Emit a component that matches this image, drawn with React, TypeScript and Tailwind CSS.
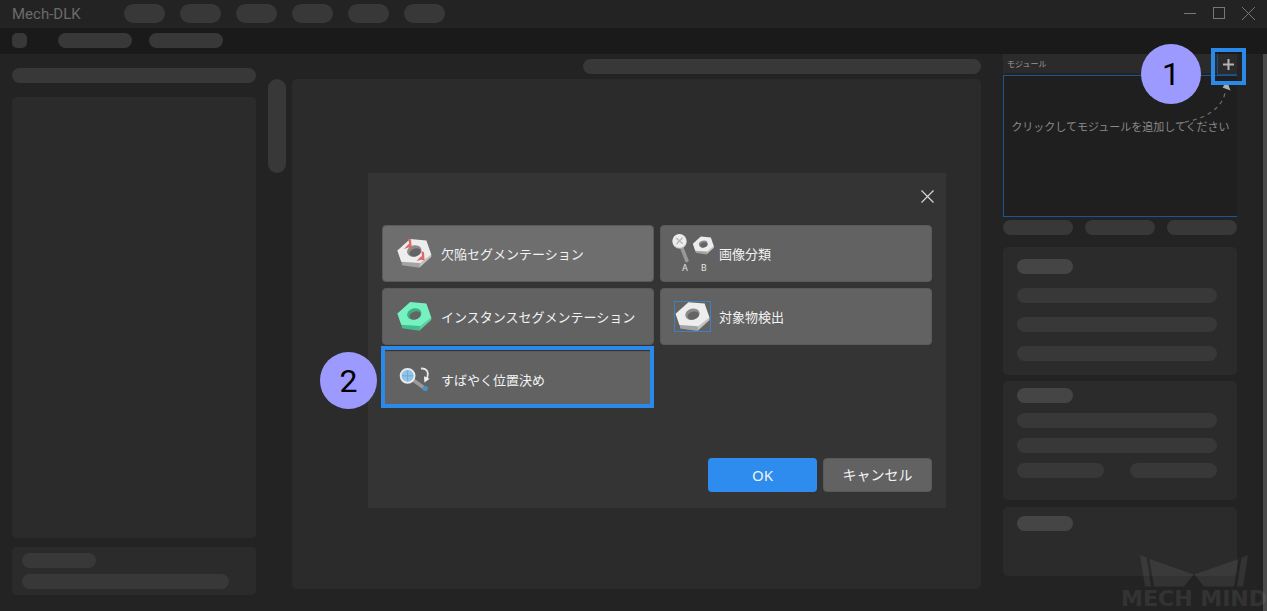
import type { ReactNode } from "react";
import clsx from "clsx";

function Pill({ className }: { className?: string }) {
  return <div className={clsx("h-[15px] shrink-0 rounded-full", className ?? "bg-[#383838]")} />;
}

function Step({ n, className }: { n: number; className: string }) {
  return (
    <span
      className={clsx(
        "pointer-events-none absolute flex items-center justify-center rounded-full bg-[#9c9aff] font-[Roboto,sans-serif] text-[32px] leading-none text-black",
        className,
      )}
    >
      {n}
    </span>
  );
}

function Nut({ face = "#ededed", left = "#a3a3a3", right = "#c2c2c2", inner = "#8b8b8b" }) {
  return (
    <>
      <path d="M0.5 12.5 4.5 23.5 5 27.2 22.3 29.7 23 24z" fill={left} />
      <path d="M22.6 24 34.2 16 34.4 18.8 22.3 29.7z" fill={right} />
      <path
        d="M0.4 12.6 13.2 1 29.4 2.4 34.3 16.4 23 25 4.2 23.8z"
        fill={face}
      />
      <ellipse cx="17.3" cy="13" rx="7.3" ry="5.6" transform="rotate(-16 17.3 13)" fill={inner} />
      <ellipse cx="18.1" cy="14.4" rx="5.8" ry="3.9" transform="rotate(-16 18.1 14.4)" fill="#646464" />
    </>
  );
}

function DefectIcon() {
  return (
    <svg width="36" height="31" viewBox="0 0 36 31" aria-hidden="true">
      <Nut />
      <path d="M11 0.8 14 1.2 14.8 10.6 11.8 9.6 7 11 10.2 7.6 12.2 5.6z" fill="#de6a68" />
      <path d="M24.4 13 27 14.2 27.6 22.8 24.6 21.8 19.6 23 22.8 19.6 25 18z" fill="#de6a68" />
    </svg>
  );
}

function InstanceIcon() {
  return (
    <svg width="36" height="31" viewBox="0 0 36 31" aria-hidden="true">
      <Nut face="#76f2c0" left="#43bd8c" right="#57d3a1" inner="#3fae84" />
    </svg>
  );
}

function ClassifyIcon() {
  return (
    <svg width="42" height="40" viewBox="0 0 42 40" aria-hidden="true">
      <path d="M9.5 13 14.8 26.5" stroke="#989898" strokeWidth="3.6" strokeLinecap="round" />
      <circle cx="7.6" cy="7.6" r="7.2" fill="#bdbdbd" />
      <circle cx="7.4" cy="6.9" r="6.9" fill="#ececec" />
      <path d="M4 4 10.8 9.8M10.6 3.6 4.4 10.2" stroke="#b9b9b9" strokeWidth="1.5" />
      <g transform="translate(20.6 2) scale(0.62)">
        <Nut />
      </g>
      <text x="10" y="37" fill="#e4e4e4" fontSize="9" fontFamily="Roboto, sans-serif">
        A
      </text>
      <text x="29" y="37" fill="#e4e4e4" fontSize="9" fontFamily="Roboto, sans-serif">
        B
      </text>
    </svg>
  );
}

function DetectIcon() {
  return (
    <svg width="38" height="31" viewBox="0 0 38 31" aria-hidden="true">
      <rect x="0.5" y="0.5" width="36" height="30" fill="none" stroke="#3c7fc4" />
      <g transform="translate(1.2 0.2)">
        <Nut />
      </g>
    </svg>
  );
}

function LocateIcon() {
  return (
    <svg width="32" height="26" viewBox="0 0 32 26" aria-hidden="true">
      <path d="M14 13 26 21.5" stroke="#9b9b9b" strokeWidth="3.4" />
      <circle cx="26.3" cy="21.4" r="2.7" fill="#4f8dbb" />
      <circle cx="8.6" cy="8.8" r="7" fill="#8fc3ea" stroke="#ececec" strokeWidth="1.8" />
      <path d="M8.6 3.5V14M3.2 8.8H14" stroke="#71a9d4" strokeWidth="1" />
      <path d="M22 1.6C27.6 0.8 30.2 5.2 28 11" fill="none" stroke="#e8e8e8" strokeWidth="1.8" />
      <path d="M25 9.2 30.6 11.8 25.4 15.4z" fill="#f0f0f0" />
    </svg>
  );
}

const modules: { label: string; icon: ReactNode; hovered?: boolean; step?: number }[] = [
  { label: "欠陥セグメンテーション", icon: <DefectIcon />, hovered: true },
  { label: "画像分類", icon: <ClassifyIcon /> },
  { label: "インスタンスセグメンテーション", icon: <InstanceIcon /> },
  { label: "対象物検出", icon: <DetectIcon /> },
  { label: "すばやく位置決め", icon: <LocateIcon />, step: 2 },
];

function TitleBar() {
  return (
    <header className="flex h-7 items-center justify-between bg-[#232323] px-3 text-[#777777]">
      <div className="flex items-center">
        <h1 className="w-28 font-[Roboto,sans-serif] text-[15px] leading-5 text-[#6b6b6b]">Mech-DLK</h1>
        <div className="flex gap-[15px] pb-px">
          {[1, 2, 3, 4, 5, 6].map((i) => (
            <div className="h-[19px] w-[41px] rounded-full bg-[#383838]" key={i} />
          ))}
        </div>
      </div>
      <div className="flex gap-4 pb-px">
        <button type="button" aria-label="最小化">
          <svg width="13" height="13" viewBox="0 0 13 13" stroke="currentColor">
            <path d="M0 6.5H12" />
          </svg>
        </button>
        <button type="button" aria-label="最大化">
          <svg width="13" height="13" viewBox="0 0 13 13" fill="none" stroke="currentColor">
            <rect x="0.5" y="0.5" width="11" height="11" />
          </svg>
        </button>
        <button type="button" aria-label="閉じる">
          <svg width="13" height="13" viewBox="0 0 13 13" stroke="currentColor">
            <path d="M0 0 13 13M13 0 0 13" />
          </svg>
        </button>
      </div>
    </header>
  );
}

function LeftPanel() {
  return (
    <aside className="mr-3 flex w-[244px] shrink-0 flex-col pt-3.5 pb-4">
      <Pill />
      <div className="mt-3.5 flex-1 rounded-[5px] bg-[#2b2b2b]" />
      <div className="mt-[9px] flex h-12 flex-col gap-1.5 rounded-[5px] bg-[#2b2b2b] px-2.5 pt-1.5">
        <Pill className="w-[74px] bg-[#383838]" />
        <Pill className="w-[207px] bg-[#383838]" />
      </div>
    </aside>
  );
}

function ModulePanel() {
  return (
    <section>
      <div className="relative z-10 flex h-[21px] items-start">
        <div className="flex h-[19px] flex-1 items-center justify-between bg-[#2b2b2b] px-1">
          <h2 className="text-[8px] leading-none text-[#9a9a9a]">モジュール</h2>
        </div>
        <div className="relative">
          <button
            type="button"
            aria-label="モジュールを追加"
            className="flex h-[21px] w-5 items-center justify-end border-b border-l border-[#1c4c80] bg-[#2b2b2b] pr-[3px]"
          >
            <svg width="11" height="11" viewBox="0 0 11 11" stroke="#b4b4b4" strokeWidth="2">
              <path d="M5.5 0V11M0 5.5H11" />
            </svg>
          </button>
          <span className="pointer-events-none absolute -top-1.5 -left-1.5 h-[37px] w-[35px] border-4 border-[#2b8ae9]" />
          <Step n={1} className="-top-2.5 right-9 size-[60px]" />
        </div>
      </div>
      <div className="relative h-[142px] border-y border-l border-[#1c5590] bg-[#1f1f1f] pt-[43px] text-center">
        <p className="text-[11px] leading-4 whitespace-nowrap text-[#8a8a8a]">
          クリックしてモジュールを追加してください
        </p>
        <svg className="absolute top-0 right-0" width="56" height="50" viewBox="0 0 56 50" fill="none" aria-hidden="true">
          <path d="M4 46C28 42 42 30 44.5 15" stroke="#6a6a6a" strokeWidth="1.3" strokeDasharray="4 4" />
          <path d="M46 5 41.5 11.5 49.5 14.5z" fill="#b0b0b0" />
        </svg>
      </div>
      <div className="mt-[3px] flex justify-between">
        <Pill className="w-[70px] bg-[#383838]" />
        <Pill className="w-[70px] bg-[#383838]" />
        <Pill className="w-[70px] bg-[#383838]" />
      </div>
    </section>
  );
}

function RightPanel() {
  return (
    <aside className="mr-[26px] ml-[22px] flex w-[234px] shrink-0 flex-col">
      <ModulePanel />
      <div className="mt-3 flex h-32 flex-col gap-3.5 rounded-[5px] bg-[#2b2b2b] pt-3 pr-5 pl-3.5">
        <Pill className="w-14 bg-[#454545]" />
        <Pill />
        <Pill />
        <Pill />
      </div>
      <div className="mt-1.5 flex h-[119px] flex-col gap-2.5 rounded-[5px] bg-[#2b2b2b] pt-[7px] pr-5 pl-3.5">
        <Pill className="w-14 bg-[#454545]" />
        <Pill />
        <Pill />
        <div className="flex justify-between">
          <Pill className="w-[87px] bg-[#383838]" />
          <Pill className="w-[87px] bg-[#383838]" />
        </div>
      </div>
      <div className="mt-[7px] h-[69px] rounded-[5px] bg-[#2b2b2b] pt-[9px] pl-3.5">
        <Pill className="w-14 bg-[#454545]" />
      </div>
    </aside>
  );
}

function Watermark() {
  return (
    <div className="pointer-events-none absolute right-0 bottom-0 flex flex-col items-center text-white opacity-[0.07]">
      <svg width="108" height="32" viewBox="0 0 108 32" fill="currentColor" aria-hidden="true">
        <path d="M0 0 6.5 2.5 11 31.5H5z" />
        <path d="M9.5 4 53.5 19.5 44 31.5H14z" />
        <path d="M98.5 4 54.5 19.5 64 31.5H94z" />
        <path d="M108 0 101.5 2.5 97 31.5H103z" />
      </svg>
      <span className="font-['DejaVu_Sans'] text-[22px] leading-6 font-bold whitespace-nowrap">MECH MIND</span>
    </div>
  );
}

function AddModuleDialog() {
  return (
    <div className="absolute inset-0 z-20 flex items-center justify-center pt-[70px] pl-[47px]">
      <div role="dialog" aria-label="モジュールを追加" className="w-[578px] bg-[#343434] pb-4 text-[#f2f2f2]">
        <div className="flex h-[52px] items-center justify-end pr-3">
          <button type="button" aria-label="閉じる" className="-mt-1.5">
            <svg width="13" height="13" viewBox="0 0 13 13" stroke="#d6d6d6" strokeWidth="1.2">
              <path d="M0.5 0.5 12.5 12.5M12.5 0.5 0.5 12.5" />
            </svg>
          </button>
        </div>
        <div className="grid grid-cols-2 gap-1.5 px-3.5">
          {modules.map((m) => (
            <div className="relative" key={m.label}>
              <button
                type="button"
                className={clsx(
                  "flex h-[57px] w-full items-center rounded border border-[#5a5a5a] text-left text-[13px] leading-5",
                  m.hovered ? "bg-[#6e6e6e]" : "bg-[#626262]",
                )}
              >
                <span className="flex w-[58px] shrink-0 justify-center pl-1.5">{m.icon}</span>
                {m.label}
              </button>
              {m.step && (
                <>
                  <span className="pointer-events-none absolute -top-[5px] right-0 bottom-0 -left-px border-4 border-[#2b8ae9]" />
                  <Step n={m.step} className="top-px -left-[62px] size-[57px]" />
                </>
              )}
            </div>
          ))}
        </div>
        <div className="mt-[50px] flex justify-end gap-1.5 px-3.5">
          <button type="button" className="h-[34px] w-[109px] rounded bg-[#2d8cee] text-[15px] leading-5">
            OK
          </button>
          <button
            type="button"
            className="h-[34px] w-[109px] rounded border border-[#5a5a5a] bg-[#626262] text-sm"
          >
            キャンセル
          </button>
        </div>
      </div>
    </div>
  );
}

export default function App() {
  return (
    <div
      lang="ja"
      className="relative flex min-h-screen flex-col overflow-hidden bg-[#232323] font-['Noto_Sans','Noto_Sans_CJK_JP',sans-serif]"
    >
      <TitleBar />
      <div className="flex h-[26px] items-center bg-[#1a1a1a] px-3 pb-px">
        <div className="mr-[31px] size-[15px] rounded-[5px] bg-[#383838]" />
        <Pill className="mr-[17px] w-[74px] bg-[#383838]" />
        <Pill className="w-[74px] bg-[#383838]" />
      </div>
      <main className="flex flex-1 pl-3">
        <LeftPanel />
        <div className="mt-[25px] mr-1.5 h-[94px] w-[18px] shrink-0 rounded-full bg-[#383838]" />
        <div className="flex min-w-0 flex-1 flex-col gap-[5px] pt-[5px] pb-[22px]">
          <Pill className="w-[398px] self-end bg-[#383838]" />
          <div className="flex-1 rounded-[5px] bg-[#2b2b2b]" />
        </div>
        <RightPanel />
        <div className="w-1 shrink-0 bg-[#4a4a4a]" />
      </main>
      <Watermark />
      <AddModuleDialog />
    </div>
  );
}
